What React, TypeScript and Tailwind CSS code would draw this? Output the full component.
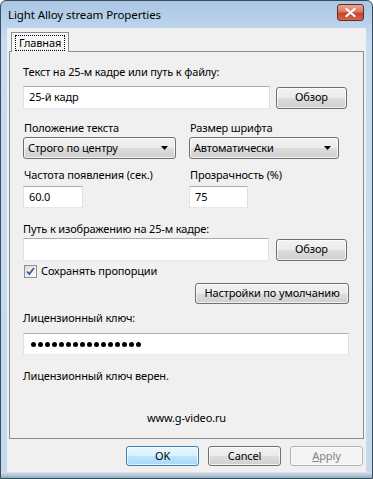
import type { ReactNode } from "react";

const FONT = "font-['Noto_Sans','Open_Sans','DejaVu_Sans',sans-serif]";
const TXT = "text-[11px] tracking-[-0.15px]";

function Label({ children, className = "" }: { children: ReactNode; className?: string }) {
  return <div className={`h-4 leading-4 text-black ${TXT} ${className}`}>{children}</div>;
}

function TextBox({ children, className = "" }: { children?: ReactNode; className?: string }) {
  return (
    <div
      className={`flex items-center border border-[#abadb3] border-r-[#dbdfe6] border-b-[#e3e9ef] border-l-[#e2e3ea] bg-white px-[5px] text-black ${TXT} ${className}`}
    >
      {children}
    </div>
  );
}

function Button({
  children,
  className = "",
  variant = "normal",
}: {
  children: ReactNode;
  className?: string;
  variant?: "normal" | "default" | "disabled";
}) {
  const look =
    variant === "default"
      ? "border-[#3c7fb1] bg-[linear-gradient(to_bottom,#eaf6fd_0%,#d9f0fc_50%,#bee6fd_50%,#a7d9f5_100%)] text-black"
      : variant === "disabled"
        ? "border-[#adb2b5] bg-[#f4f4f4] text-[#838383]"
        : "border-[#707070] bg-[linear-gradient(to_bottom,#f2f2f2_0%,#ebebeb_50%,#dddddd_50%,#cfcfcf_100%)] text-black";
  return (
    <div
      className={`flex items-center justify-center rounded-[3px] border shadow-[inset_0_0_0_1px_rgba(255,255,255,0.7)] ${TXT} ${look} ${className}`}
    >
      {children}
    </div>
  );
}

function Combo({ value, className = "" }: { value: string; className?: string }) {
  return (
    <div
      className={`flex items-center justify-between rounded-[3px] border border-[#707070] bg-[linear-gradient(to_bottom,#f2f2f2_0%,#ebebeb_50%,#dddddd_50%,#cfcfcf_100%)] pl-[4px] pr-[7px] text-black shadow-[inset_0_0_0_1px_rgba(255,255,255,0.7)] ${TXT} ${className}`}
    >
      <span>{value}</span>
      <svg width="7" height="4" viewBox="0 0 7 4">
        <path d="M0 0h7L3.5 4z" fill="#000" />
      </svg>
    </div>
  );
}

function CheckBox() {
  return (
    <div className="flex h-[13px] w-[13px] items-center justify-center border border-[#8e8f8f] bg-[linear-gradient(135deg,#dcdcdc,#ffffff)]">
      <svg width="9" height="9" viewBox="0 0 9 9">
        <path d="M1 4.5l2.3 2.6L8 1" fill="none" stroke="#3a5a9c" strokeWidth="1.7" />
      </svg>
    </div>
  );
}

const DOTS = Array.from({ length: 16 }, (_, i) => i);

export default function App() {
  return (
    <div
      className={`flex h-[479px] w-[373px] flex-col overflow-hidden rounded-t-[6px] border border-[#3a4d5c] bg-[linear-gradient(to_bottom,#a9c6e3,#c7dcf1_40px,#c4daef)] ${FONT}`}
    >
      {/* title bar */}
      <div className="flex h-[27px] shrink-0 items-center justify-between pl-[7px] pr-[8px]">
        <span className="text-[11.5px] tracking-[-0.1px] text-black">Light Alloy stream Properties</span>
        <div className="mb-[5px] flex h-[17px] w-[27px] items-center justify-center rounded-[3px] border border-[#6d2a22] bg-[linear-gradient(to_bottom,#e8a593,#d77a63_45%,#c0452b_55%,#d2654a)]">
          <svg width="11" height="9" viewBox="0 0 11 9">
            <path d="M1.5 1l8 7M9.5 1l-8 7" stroke="#fff" strokeWidth="2.2" strokeLinecap="round" />
          </svg>
        </div>
      </div>

      {/* client area */}
      <div className="mx-[6px] flex flex-1 flex-col bg-[#f0f0f0] px-[2px]">
        {/* tab strip */}
        <div className="mt-[4px] flex h-[19px] shrink-0 items-end pl-[2px]">
          <div className="relative z-10 -mb-px flex h-[20px] w-[58px] items-center justify-center border border-b-0 border-[#898c95] bg-[#f7f7f7]">
            <span className={`border border-dotted border-black px-[3px] leading-[14px] ${TXT}`}>Главная</span>
          </div>
        </div>

        {/* tab page */}
        <div className="flex h-[388px] shrink-0 flex-col border border-[#898c95] bg-[#f0f0f0] px-[13px]">
          <Label className="mt-[12px]">Текст на 25-м кадре или путь к файлу:</Label>
          <div className="mt-[6px] flex items-center">
            <TextBox className="h-[23px] w-[247px]">25-й кадр</TextBox>
            <Button className="ml-[6px] h-[22px] w-[71px]">Обзор</Button>
          </div>

          <div className="mt-[11px] flex">
            <div className="flex w-[166px] flex-col">
              <Label className="pl-px">Положение текста</Label>
              <Combo value="Строго по центру" className="mt-[1px] h-[22px] w-[153px]" />
            </div>
            <div className="flex flex-col">
              <Label className="pl-[1px]">Размер шрифта</Label>
              <Combo value="Автоматически" className="mt-[1px] h-[22px] w-[150px]" />
            </div>
          </div>

          <div className="mt-[8px] flex">
            <div className="flex w-[166px] flex-col">
              <Label className="pl-px">Частота появления (сек.)</Label>
              <TextBox className="mt-[3px] h-[22px] w-[60px]">60.0</TextBox>
            </div>
            <div className="flex flex-col">
              <Label className="pl-[1px]">Прозрачность (%)</Label>
              <TextBox className="mt-[3px] h-[22px] w-[59px]">75</TextBox>
            </div>
          </div>

          <Label className="mt-[13px]">Путь к изображению на 25-м кадре:</Label>
          <div className="mt-[1px] flex items-center">
            <TextBox className="h-[23px] w-[246px]" />
            <Button className="ml-[7px] h-[22px] w-[71px]">Обзор</Button>
          </div>

          <div className="mt-[4px] flex h-[13px] items-center gap-[4px] pl-[1px]">
            <CheckBox />
            <span className={TXT}>Сохранять пропорции</span>
          </div>

          <div className="mt-[5px] flex justify-end pr-[1px]">
            <Button className="h-[21px] w-[154px]">Настройки по умолчанию</Button>
          </div>

          <Label className="mt-[6px]">Лицензионный ключ:</Label>
          <TextBox className="mt-[7px] h-[22px] w-[326px] gap-[2px] pl-[7px]">
            {DOTS.map((i) => (
              <span key={i} className="h-[5px] w-[5px] rounded-full bg-black" />
            ))}
          </TextBox>

          <Label className="mt-[13px]">Лицензионный ключ верен.</Label>

          <Label className="mt-[26px] text-center">www.g-video.ru</Label>
        </div>

        {/* dialog buttons */}
        <div className="mt-[7px] flex justify-end gap-[9px] pr-[1px]">
          <Button variant="default" className="h-[20px] w-[73px]">OK</Button>
          <Button className="h-[20px] w-[73px]">Cancel</Button>
          <Button variant="disabled" className="h-[20px] w-[73px]">
            <span className="underline decoration-[#838383]">A</span>pply
          </Button>
        </div>
        <div className="flex-1" />
      </div>
      <div className="h-[6px] shrink-0 bg-[linear-gradient(to_bottom,#e8dcea,#7fb4c4)]" />
    </div>
  );
}
